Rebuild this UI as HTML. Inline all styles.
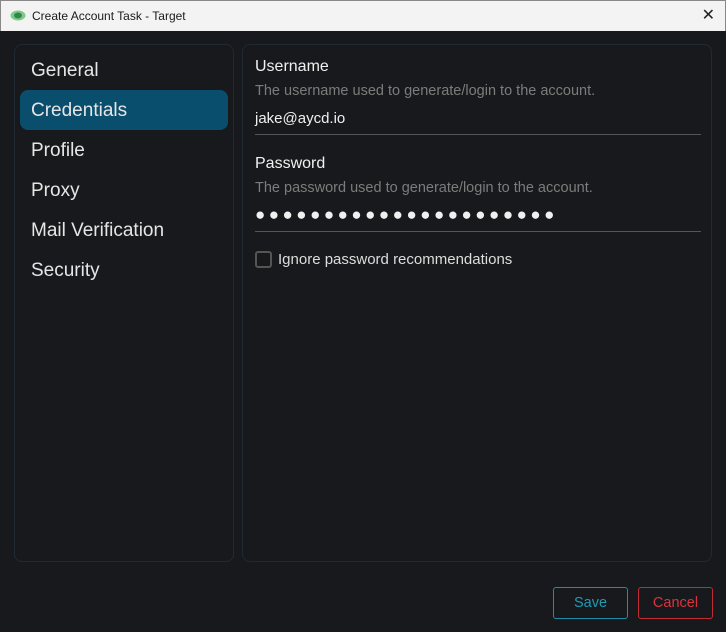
<!DOCTYPE html>
<html><head><style>
*{box-sizing:border-box;margin:0;padding:0}
body{width:726px;height:632px;background:#18191c;font-family:"Liberation Sans",sans-serif;position:relative;overflow:hidden;color:#e8e8e8}
.title{position:absolute;left:0;top:0;width:726px;height:31px;background:#f3f3f3;color:#1a1a1a;font-size:12px;border:1px solid #888;border-bottom:none}
.title span{position:absolute;left:31px;top:8px}
.title .x{position:absolute;right:10px;top:4px;font-size:16px;color:#222}
.side{position:absolute;left:14px;top:44px;width:220px;height:518px;border:1px solid #1f2a33;border-radius:8px}
.item{position:absolute;left:17px;font-size:19px;color:#e6e6e6}
.sel{position:absolute;left:20px;top:90px;width:208px;height:40px;background:#0a4e6d;border-radius:8px}
.main{position:absolute;left:242px;top:44px;width:470px;height:518px;border:1px solid #1f2a33;border-radius:8px}
.lab{position:absolute;left:12px;font-size:16px;color:#f0f0f0}
.desc{position:absolute;left:12px;font-size:14.5px;color:#7c7c7c}
.line{position:absolute;left:12px;width:446px;height:1px;background:#555}
.btn{position:absolute;top:587px;height:32px;border-radius:3px;font-size:14.5px;text-align:center;line-height:31px}
</style></head><body>
<div class="title"><svg style="position:absolute;left:9px;top:9px" width="16" height="11"><ellipse cx="8" cy="5.5" rx="7.5" ry="5" fill="#7fc98a"/><ellipse cx="8" cy="5.5" rx="4" ry="3" fill="#2f8a4a"/></svg><span>Create Account Task - Target</span><div class="x">✕</div></div>
<div class="side"></div>
<div class="sel"></div>
<div class="item" style="left:31px;top:60px">General</div>
<div class="item" style="left:31px;top:100px">Credentials</div>
<div class="item" style="left:31px;top:140px">Profile</div>
<div class="item" style="left:31px;top:180px">Proxy</div>
<div class="item" style="left:31px;top:220px">Mail Verification</div>
<div class="item" style="left:31px;top:260px">Security</div>
<div class="main">
<div class="lab" style="top:13px">Username</div>
<div class="desc" style="top:38px">The username used to generate/login to the account.</div>
<div class="lab" style="top:65px;font-size:15px">jake@aycd.io</div>
<div class="line" style="top:89px"></div>
<div class="lab" style="top:110px">Password</div>
<div class="desc" style="top:135px">The password used to generate/login to the account.</div>
<div class="lab" style="top:160px;font-size:17px;letter-spacing:3.5px">●●●●●●●●●●●●●●●●●●●●●●</div>
<div class="line" style="top:186px"></div>
<div style="position:absolute;left:12px;top:206px;width:17px;height:17px;border:2px solid #555;border-radius:3px"></div>
<div class="lab" style="left:35px;top:206px;font-size:15px;color:#ddd">Ignore password recommendations</div>
</div>
<div class="btn" style="left:553px;width:75px;border:1px solid #1d8ea4;color:#1d9bb5">Save</div>
<div class="btn" style="left:638px;width:75px;border:1px solid #c22b33;color:#d9343d">Cancel</div>
</body></html>
